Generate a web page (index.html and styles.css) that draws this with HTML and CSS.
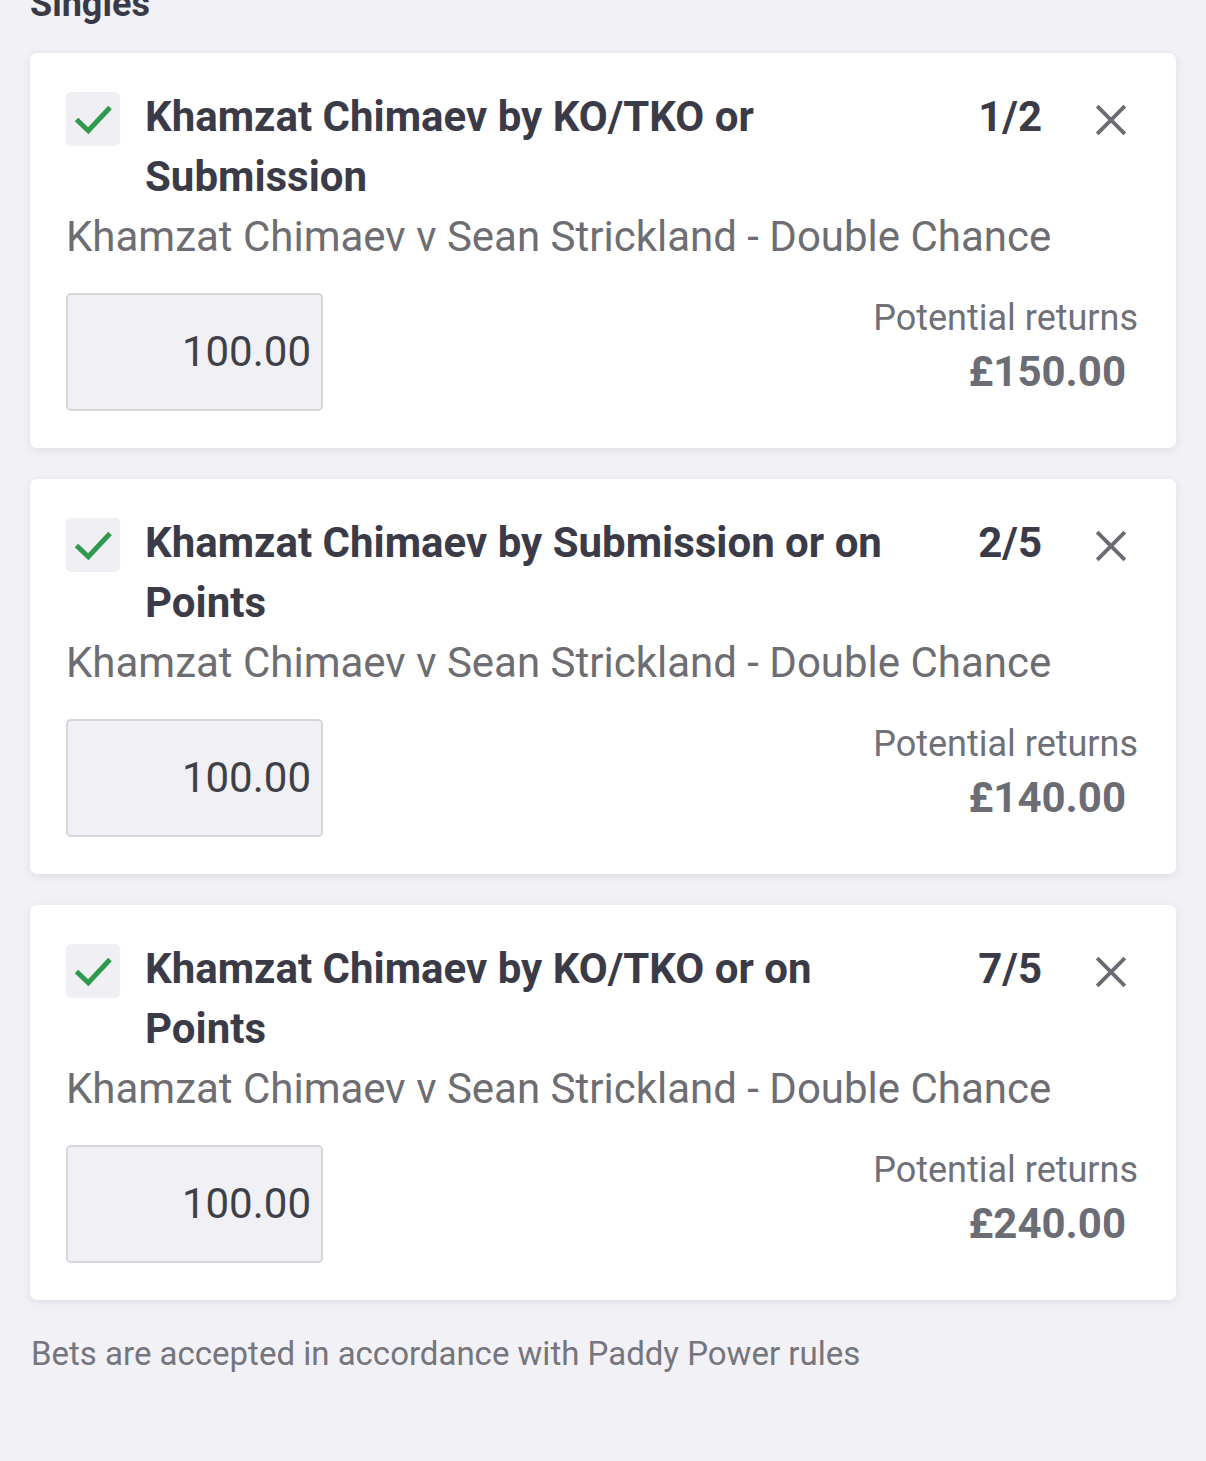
FILE: index.html
```html
<!DOCTYPE html>
<html>
<head>
<meta charset="utf-8">
<link rel="stylesheet" href="styles.css">
</head>
<body>
<div class="page">
  <h2 class="section-title">Singles</h2>

  <div class="card">
    <div class="head">
      <div class="check"><svg viewBox="0 0 54 54" width="54" height="54"><path d="M10.5 27.5L22.3 38.8L44 15.5" fill="none" stroke="#2f9a4d" stroke-width="5"/></svg></div>
      <div class="title">Khamzat Chimaev by KO/TKO or Submission</div>
      <div class="odds">1/2</div>
      <div class="close"><svg viewBox="0 0 32 32" width="34" height="34"><path d="M3 3L29 29M29 3L3 29" stroke="#6b6b73" stroke-width="3.6"/></svg></div>
    </div>
    <div class="market">Khamzat Chimaev v Sean Strickland - Double Chance</div>
    <div class="bottom">
      <div class="stake">100.00</div>
      <div class="returns">
        <div class="ret-label">Potential returns</div>
        <div class="ret-amount">£150.00</div>
      </div>
    </div>
  </div>

  <div class="card">
    <div class="head">
      <div class="check"><svg viewBox="0 0 54 54" width="54" height="54"><path d="M10.5 27.5L22.3 38.8L44 15.5" fill="none" stroke="#2f9a4d" stroke-width="5"/></svg></div>
      <div class="title">Khamzat Chimaev by Submission or on Points</div>
      <div class="odds">2/5</div>
      <div class="close"><svg viewBox="0 0 32 32" width="34" height="34"><path d="M3 3L29 29M29 3L3 29" stroke="#6b6b73" stroke-width="3.6"/></svg></div>
    </div>
    <div class="market">Khamzat Chimaev v Sean Strickland - Double Chance</div>
    <div class="bottom">
      <div class="stake">100.00</div>
      <div class="returns">
        <div class="ret-label">Potential returns</div>
        <div class="ret-amount">£140.00</div>
      </div>
    </div>
  </div>

  <div class="card">
    <div class="head">
      <div class="check"><svg viewBox="0 0 54 54" width="54" height="54"><path d="M10.5 27.5L22.3 38.8L44 15.5" fill="none" stroke="#2f9a4d" stroke-width="5"/></svg></div>
      <div class="title">Khamzat Chimaev by KO/TKO or on Points</div>
      <div class="odds">7/5</div>
      <div class="close"><svg viewBox="0 0 32 32" width="34" height="34"><path d="M3 3L29 29M29 3L3 29" stroke="#6b6b73" stroke-width="3.6"/></svg></div>
    </div>
    <div class="market">Khamzat Chimaev v Sean Strickland - Double Chance</div>
    <div class="bottom">
      <div class="stake">100.00</div>
      <div class="returns">
        <div class="ret-label">Potential returns</div>
        <div class="ret-amount">£240.00</div>
      </div>
    </div>
  </div>

  <p class="footer">Bets are accepted in accordance with Paddy Power rules</p>
</div>
</body>
</html>
```
FILE: styles.css
```css
html, body {
  margin: 0;
  padding: 0;
  background: #f1f1f6;
  font-family: Roboto, "Liberation Sans", Arial, sans-serif;
}
.page {
  padding: 0 30px 0 30px;
  height: 1461px;
  overflow: hidden;
}
.section-title {
  margin: -16px 0 0 0;
  font-size: 36px;
  line-height: 40px;
  height: 40px;
  font-weight: 700;
  color: #3a3a46;
}
.card {
  background: #fff;
  border-radius: 7px;
  box-shadow: 0 2px 9px rgba(40, 40, 60, 0.10);
  padding: 34px 38px 37px 36px;
  margin-top: 29px;
  height: 395px;
  box-sizing: border-box;
}
.card + .card {
  margin-top: 31px;
}
.head {
  display: flex;
  align-items: flex-start;
}
.check {
  width: 54px;
  height: 54px;
  margin-top: 5px;
  background: #f0f0f4;
  border-radius: 5px;
  flex: none;
}
.check svg {
  display: block;
}
.title {
  flex: 1;
  margin-left: 25px;
  font-size: 42px;
  line-height: 60px;
  font-weight: 700;
  color: #3b3b47;
  padding-right: 30px;
}
.odds {
  width: 100px;
  text-align: right;
  font-size: 42px;
  line-height: 60px;
  font-weight: 700;
  color: #3b3b47;
  flex: none;
}
.close {
  width: 44px;
  height: 44px;
  margin-left: 47px;
  margin-top: 11px;
  margin-right: 5px;
  display: flex;
  align-items: center;
  justify-content: center;
  flex: none;
}
.market {
  font-size: 42px;
  line-height: 60px;
  color: #6d6d72;
  white-space: nowrap;
}
.bottom {
  display: flex;
  justify-content: space-between;
  align-items: flex-start;
  margin-top: 26px;
}
.stake {
  width: 257px;
  height: 118px;
  box-sizing: border-box;
  border: 2px solid #d5d5da;
  border-radius: 5px;
  background: #f0f0f5;
  text-align: right;
  padding-right: 10px;
  font-size: 42px;
  line-height: 114px;
  color: #3f3f48;
}
.returns {
  text-align: right;
  padding-top: 4px;
}
.ret-label {
  font-size: 36px;
  line-height: 42px;
  color: #707078;
}
.ret-amount {
  font-size: 42px;
  line-height: 66px;
  font-weight: 700;
  color: #6c6c74;
  padding-right: 12px;
}
.footer {
  margin: 34px 0 0 1px;
  font-size: 33px;
  line-height: 40px;
  color: #75757d;
}
```
